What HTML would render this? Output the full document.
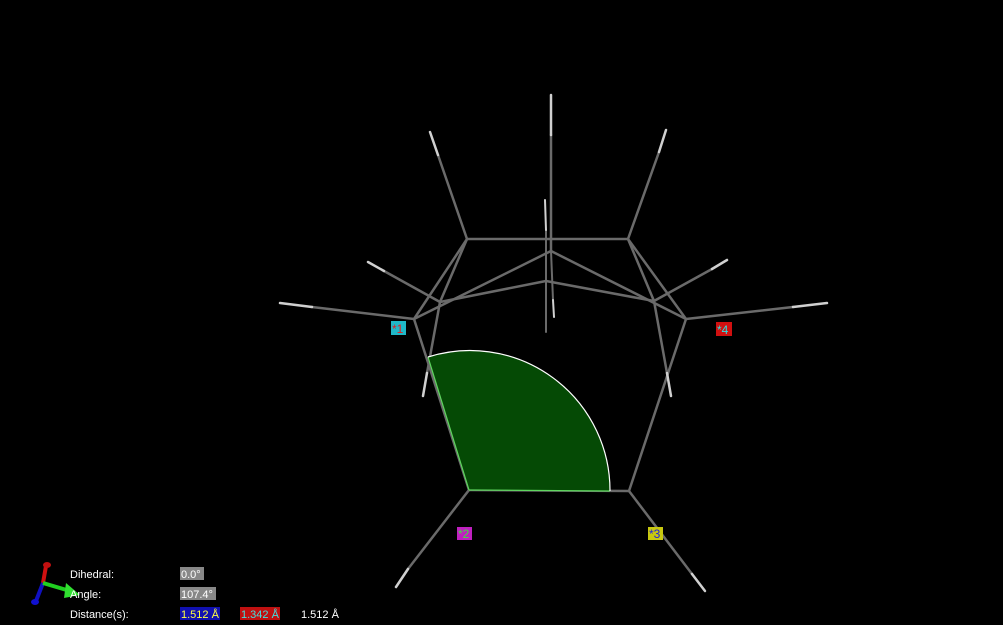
<!DOCTYPE html>
<html><head><meta charset="utf-8"><style>
html,body{margin:0;padding:0;background:#000;width:1003px;height:625px;overflow:hidden}
svg{position:absolute;left:0;top:0}
.t{font-family:"Liberation Sans",sans-serif;font-size:11px;fill:#fff}
</style></head><body>
<svg width="1003" height="625" viewBox="0 0 1003 625">
<g stroke="#6a6a6a" stroke-width="2.5" stroke-linecap="round" fill="none">
<line x1="467" y1="239" x2="628" y2="239"/>
<line x1="467" y1="239" x2="414" y2="319"/>
<line x1="467" y1="239" x2="440" y2="302"/>
<line x1="628" y1="239" x2="686" y2="319"/>
<line x1="628" y1="239" x2="654" y2="301"/>
<line x1="551" y1="251" x2="414" y2="319"/>
<line x1="551" y1="251" x2="686" y2="319"/>
<line x1="546" y1="281" x2="440" y2="302"/>
<line x1="546" y1="281" x2="654" y2="301"/>
<line x1="414" y1="319" x2="469" y2="490"/>
<line x1="469" y1="490" x2="629" y2="491"/>
<line x1="629" y1="491" x2="686" y2="319"/>
<line x1="551" y1="251" x2="551" y2="135"/>
<line x1="467" y1="239" x2="438" y2="155"/>
<line x1="628" y1="239" x2="659" y2="152"/>
<line x1="414" y1="319" x2="312" y2="307"/>
<line x1="686" y1="319" x2="793" y2="307"/>
<line x1="440" y1="302" x2="384" y2="271"/>
<line x1="654" y1="301" x2="712" y2="269"/>
<line x1="440" y1="302" x2="427" y2="373"/>
<line x1="654" y1="301" x2="667" y2="373"/>
<line x1="469" y1="490" x2="408" y2="569"/>
<line x1="629" y1="491" x2="692" y2="574"/>
<line x1="546" y1="281" x2="546" y2="230" stroke-width="2"/>
<line x1="546" y1="281" x2="546" y2="332" stroke-width="2"/>
<line x1="551" y1="251" x2="553" y2="300" stroke-width="2"/>
</g>
<g stroke="#d0d0d0" stroke-width="2.5" stroke-linecap="round">
<line x1="551" y1="135" x2="551" y2="95"/>
<line x1="438" y1="155" x2="430" y2="132"/>
<line x1="659" y1="152" x2="666" y2="130"/>
<line x1="312" y1="307" x2="280" y2="303"/>
<line x1="793" y1="307" x2="827" y2="303"/>
<line x1="384" y1="271" x2="368" y2="262"/>
<line x1="712" y1="269" x2="727" y2="260"/>
<line x1="427" y1="373" x2="423" y2="396"/>
<line x1="667" y1="373" x2="671" y2="396"/>
<line x1="408" y1="569" x2="396" y2="587"/>
<line x1="692" y1="574" x2="705" y2="591"/>
<line x1="546" y1="230" x2="545" y2="200" stroke-width="2"/>
<line x1="553" y1="300" x2="554" y2="317" stroke-width="2"/>
</g>
<path d="M469 490 L428 357 A140 140 0 0 1 610 491 Z" fill="#054a05"/>
<line x1="469" y1="490" x2="428" y2="357" stroke="#5fd65f" stroke-width="1.2"/>
<line x1="469" y1="490" x2="610" y2="491" stroke="#5fd65f" stroke-width="1.2"/>
<path d="M428 357 A140 140 0 0 1 610 491" fill="none" stroke="#fff" stroke-width="1.2"/>
<rect x="391" y="321" width="15" height="14" fill="#20b8c8"/>
<text x="392" y="333" font-family="Liberation Sans" font-size="12" fill="#e02020">*1</text>
<rect x="716" y="322" width="16" height="14" fill="#d01010"/>
<text x="717" y="334" font-family="Liberation Sans" font-size="12" fill="#30e0e0">*4</text>
<rect x="457" y="527" width="15" height="13" fill="#c020c0"/>
<text x="458" y="538" font-family="Liberation Sans" font-size="12" fill="#40e040">*2</text>
<rect x="648" y="527" width="15" height="13" fill="#c8c810"/>
<text x="649" y="538" font-family="Liberation Sans" font-size="12" fill="#2020e0">*3</text>
<line x1="43" y1="583" x2="46" y2="566" stroke="#d01010" stroke-width="4"/>
<ellipse cx="47" cy="565" rx="4" ry="3" fill="#c01010"/>
<line x1="43" y1="583" x2="36" y2="601" stroke="#1010c0" stroke-width="4"/>
<ellipse cx="35" cy="602" rx="4" ry="3" fill="#1010d0"/>
<line x1="43" y1="583" x2="70" y2="591" stroke="#20d020" stroke-width="4"/>
<polygon points="66,583 80,595 64,598" fill="#30e030"/>
<text class="t" x="70" y="578">Dihedral:</text>
<text class="t" x="70" y="598">Angle:</text>
<text class="t" x="70" y="618">Distance(s):</text>
<rect x="180" y="567" width="24" height="13" fill="#888"/>
<text class="t" x="181" y="578">0.0°</text>
<rect x="180" y="587" width="36" height="13" fill="#888"/>
<text class="t" x="181" y="598">107.4°</text>
<rect x="180" y="607" width="40" height="13" fill="#1010b0"/>
<text class="t" x="181" y="618" style="fill:#ffff40">1.512 Å</text>
<rect x="240" y="607" width="40" height="13" fill="#c01010"/>
<text class="t" x="241" y="618" style="fill:#40e0e0">1.342 Å</text>
<text class="t" x="301" y="618">1.512 Å</text>
</svg>
</body></html>
